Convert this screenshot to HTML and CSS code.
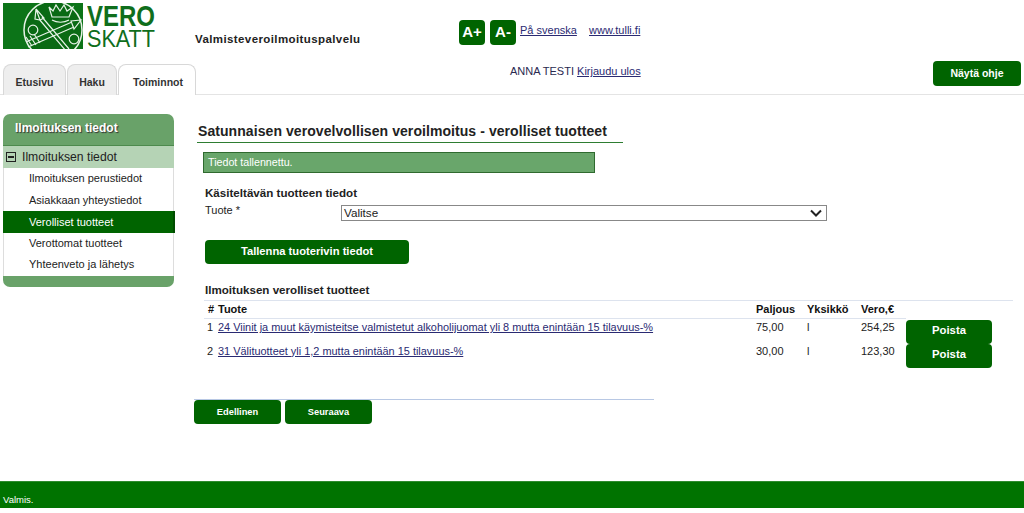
FILE: index.html
```html
<!DOCTYPE html>
<html>
<head>
    <meta charset="utf-8">
    <title>Valmisteveroilmoituspalvelu</title>
    <link rel="stylesheet" href="styles.css">
</head>
<body>

<div class="header">
    <div class="brand">
        <div class="brand-row">
            <svg class="logo" width="80" height="46" viewBox="0 0 80 46">
                <defs><clipPath id="logoClip"><rect width="80" height="46"/></clipPath></defs>
                <rect width="80" height="46" fill="#0c7418"/>
                <g clip-path="url(#logoClip)" fill="none" stroke="#e6f2e6" stroke-width="1.2">
                    <circle cx="50" cy="27" r="29" fill="#0a6a14" stroke-width="1.5"/>
                    <circle cx="30" cy="27" r="4.8"/>
                    <circle cx="71" cy="36" r="4.8"/>
                    <path d="M33 6l4 11-5-1zM33 6l8 9-4 2M36 16l27 32M39 14l27 32"/>
                    <path d="M78 17l-10 1 3 8zM69 19l-46 20M71 24l-46 20M23 34l6 9M27 33l6 9M31 31l6 9"/>
                    <path d="M46 4l3 10h17l4-10-6 4-3-6-4 6-4-6-3 6z" fill="#0a6a14"/>
                    <path d="M49 17c5 3 12 3 17 0"/>
                </g>
            </svg>
            <div class="wordmark">
                <div class="logo-vero">VERO</div>
                <div class="logo-skatt">SKATT</div>
            </div>
            <div class="service-name">Valmisteveroilmoituspalvelu</div>
        </div>
        <div class="tabs">
            <a class="tab tab-etusivu">Etusivu</a>
            <a class="tab tab-haku">Haku</a>
            <a class="tab tab-active">Toiminnot</a>
        </div>
    </div>
    <div class="tools">
        <div class="tools-row">
            <a class="size-btn">A+</a>
            <a class="size-btn">A-</a>
            <a href="#" class="link tools-link">På svenska</a>
            <a href="#" class="link tools-link">www.tulli.fi</a>
        </div>
        <div class="user">ANNA TESTI <a href="#" class="link">Kirjaudu ulos</a></div>
    </div>
    <a class="btn help-btn">Näytä ohje</a>
</div>

<div class="content">
    <div class="sidebar">
        <div class="side-head">Ilmoituksen tiedot</div>
        <div class="side-section"><span class="minus"></span>Ilmoituksen tiedot</div>
        <a class="side-item">Ilmoituksen perustiedot</a>
        <a class="side-item">Asiakkaan yhteystiedot</a>
        <a class="side-item side-active">Verolliset tuotteet</a>
        <a class="side-item">Verottomat tuotteet</a>
        <a class="side-item">Yhteenveto ja lähetys</a>
        <div class="side-foot"></div>
    </div>

    <div class="main">
        <h1>Satunnaisen verovelvollisen veroilmoitus - verolliset tuotteet</h1>
        <div class="notice">Tiedot tallennettu.</div>

        <h2 class="form-title">Käsiteltävän tuotteen tiedot</h2>
        <div class="form-row">
            <label>Tuote *</label>
            <div class="select">Valitse
                <svg width="12" height="8" viewBox="0 0 12 8"><path d="M1 1.5l5 5 5-5" fill="none" stroke="#222" stroke-width="2"/></svg>
            </div>
        </div>
        <a class="btn save-btn">Tallenna tuoterivin tiedot</a>

        <h2 class="table-title">Ilmoituksen verolliset tuotteet</h2>
        <table>
            <tr>
                <th class="col-num">#</th>
                <th class="col-name">Tuote</th>
                <th class="col-amount">Paljous</th>
                <th class="col-unit">Yksikkö</th>
                <th class="col-tax">Vero,€</th>
                <th class="col-action"></th>
            </tr>
            <tr>
                <td class="col-num">1</td>
                <td class="col-name"><a href="#" class="link">24 Viinit ja muut käymisteitse valmistetut alkoholijuomat yli 8 mutta enintään 15 tilavuus-%</a></td>
                <td>75,00</td>
                <td>l</td>
                <td>254,25</td>
                <td class="col-action"><a class="btn del-btn">Poista</a></td>
            </tr>
            <tr>
                <td class="col-num">2</td>
                <td class="col-name"><a href="#" class="link">31 Välituotteet yli 1,2 mutta enintään 15 tilavuus-%</a></td>
                <td>30,00</td>
                <td>l</td>
                <td>123,30</td>
                <td class="col-action"><a class="btn del-btn">Poista</a></td>
            </tr>
        </table>

        <div class="nav-buttons">
            <a class="btn nav-btn">Edellinen</a>
            <a class="btn nav-btn">Seuraava</a>
        </div>
    </div>
</div>

<div class="status">Valmis.</div>

</body>
</html>
```

FILE: styles.css
```css
html, body { margin: 0; padding: 0; height: 513px; overflow: hidden; background: #fff; }
body { font-family: "Liberation Sans", Arial, sans-serif; font-size: 11px; color: #222; }
a { color: inherit; text-decoration: none; }
.link { color: #2a2a72; text-decoration: underline; }

.btn { display: block; box-sizing: border-box; background: #006400; color: #fff; font-weight: bold; text-align: center; border-radius: 4px; }

/* header */
.header { display: flex; height: 95px; box-sizing: border-box; border-bottom: 1px solid #e4e4e4; padding-left: 3px; }
.brand { width: 456px; }
.brand-row { display: flex; height: 64px; padding-top: 3px; box-sizing: border-box; }
.logo { display: block; flex: none; }
.wordmark { width: 70px; margin-left: 4px; color: #0f6e1c; white-space: nowrap; }
.logo-vero { height: 25px; font-weight: bold; font-size: 30px; line-height: 25px; transform: scaleX(0.8); transform-origin: left; }
.logo-skatt { height: 21px; font-size: 24px; line-height: 21px; transform: scaleX(0.9); transform-origin: left; }
.service-name { margin: 30px 0 0 38px; font-weight: bold; font-size: 11.5px; letter-spacing: 0.4px; white-space: nowrap; }

.tabs { display: flex; gap: 1px; height: 31px; }
.tab { box-sizing: border-box; height: 31px; padding-top: 11px; text-align: center; font-weight: bold; font-size: 10.5px; background: #eee; color: #333; border: 1px solid #d8d8d8; border-bottom: 0; border-radius: 8px 8px 0 0; }
.tab-etusivu { width: 63px; }
.tab-haku { width: 50px; }
.tab-active { width: 78px; background: #fff; padding-left: 2px; }

.tools { width: 474px; padding-top: 20px; }
.tools-row { display: flex; align-items: flex-start; height: 41px; }
.size-btn { box-sizing: border-box; width: 26px; height: 25px; margin-right: 5px; background: #006400; color: #fff; border-radius: 4px; font-weight: bold; font-size: 15px; line-height: 23px; text-align: center; }
.tools-link { margin: 4px 0 0 -1px; width: 70px; }
.user { margin-left: 51px; margin-top: 4px; color: #2a2a50; }
.help-btn { width: 88px; height: 25px; margin-top: 61px; line-height: 24px; font-size: 10.5px; }

/* page body */
.content { display: flex; height: 386px; }

.sidebar { width: 171px; margin: 19px 0 0 3px; align-self: flex-start; }
.side-head { height: 32px; box-sizing: border-box; padding: 7px 0 0 12px; font-size: 12px; background: #69a269; color: #fff; font-weight: bold; border-radius: 7px 7px 0 0; border-bottom: 1px solid #4d8a4d; text-shadow: 1px 1px 1px #333; }
.side-section { display: flex; align-items: center; height: 22px; background: #b5d3b5; font-size: 12.2px; color: #222; padding-left: 3px; }
.minus { box-sizing: border-box; width: 10px; height: 10px; margin-right: 6px; border: 1px solid #222; background: linear-gradient(#222, #222) center / 6px 2px no-repeat; }
.side-item { display: block; height: 21.6px; line-height: 21.6px; box-sizing: border-box; padding-left: 25px; background: #fff; border-right: 1px solid #ddd; border-left: 1px solid #ddd; }
.side-active { background: #006400; color: #fff; border-color: #006400; border-right: 2px solid #004d00; margin-right: -1px; line-height: 22px; }
.side-foot { height: 11px; background: #69a269; border-radius: 0 0 7px 7px; }

.main { margin-left: 23px; width: 827px; }
h1 { margin: 29px 0 0; width: 426px; height: 19px; box-sizing: border-box; padding-left: 1px; font-size: 14px; line-height: 15px; letter-spacing: 0.07px; border-bottom: 1px solid #2e7d32; white-space: nowrap; }
.notice { box-sizing: border-box; width: 392px; height: 21px; margin: 9px 0 0 6px; padding: 3px 0 0 4px; background: #69a66b; border: 1px solid #2f6a2f; color: #fff; font-size: 10.7px; }
h2 { margin: 0; font-size: 11.6px; }
.form-title { margin: 13px 0 0 8px; height: 15px; line-height: 14px; }
.form-row { display: flex; align-items: flex-start; margin: 4px 0 0 8px; height: 16px; }
.form-row label { width: 136px; margin-top: -1px; }
.select { display: flex; align-items: center; justify-content: space-between; box-sizing: border-box; width: 486px; height: 16px; padding: 0 4px 1px 2px; border: 1px solid #888; font-size: 11.7px; line-height: 12px; }
.save-btn { width: 204px; height: 24px; margin: 19px 0 0 8px; line-height: 23px; font-size: 11.2px; }
.table-title { margin: 19px 0 0 8px; height: 17px; line-height: 13px; }

table { border-collapse: collapse; margin-left: 7px; width: 809px; table-layout: fixed; border-top: 1px solid #dde3ee; }
th, td { padding: 0; text-align: left; font-size: 11px; }
th { height: 17px; border-bottom: 1px solid #dde3ee; color: #111; line-height: 17px; vertical-align: top; }
td { height: 24px; vertical-align: top; padding-top: 2px; box-sizing: border-box; }
td .link { font-size: 10.93px; }
.col-num { width: 10px; text-align: right; }
td.col-num { padding-right: 1px; }
.col-name { width: 538px; padding-left: 4px; }
.col-amount { width: 51px; }
.col-unit { width: 54px; }
.col-tax { width: 45px; }
th.col-action { border-bottom: 0; }
td.col-action { padding-top: 1px; height: 24px; }
.del-btn { width: 86px; height: 24px; margin-bottom: -1px; line-height: 20px; font-size: 11.3px; }

.nav-buttons { display: flex; gap: 4px; width: 460px; margin: 32px 0 0 -3px; border-top: 1px solid #b8c8e4; }
.nav-btn { width: 87px; height: 24px; font-size: 9.3px; line-height: 24px; }

.status { box-sizing: border-box; height: 27px; background: #007300; color: #fff; font-size: 9.5px; padding: 12px 0 0 3px; border-top: 1px solid #2e8b2e; }
```
